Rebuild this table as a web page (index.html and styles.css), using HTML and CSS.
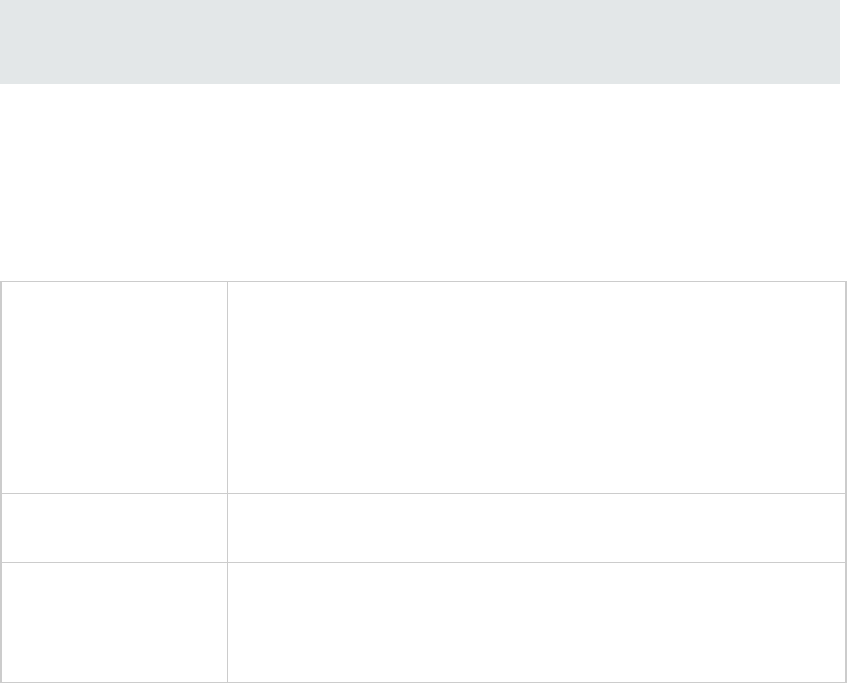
FILE: index.html
```html
<!DOCTYPE html>
<html>
<head>
<meta charset="utf-8">
<link rel="stylesheet" href="styles.css">
</head>
<body>
<div class="topbar"></div>
<main class="content">
  <table class="grid">
    <tr class="row-tall"><td class="label"></td><td class="value"></td></tr>
    <tr class="row-short"><td class="label"></td><td class="value"></td></tr>
    <tr class="row-mid"><td class="label"></td><td class="value"></td></tr>
  </table>
</main>
</body>
</html>
```
FILE: styles.css
```css
html, body {
  margin: 0;
  padding: 0;
  background: #ffffff;
  font-family: "Liberation Sans", Arial, sans-serif;
}
.topbar {
  width: 840px;
  height: 84px;
  background: #e3e7e8;
}
.content {
  padding: 197px 1px 0 0;
}
.grid {
  width: 847px;
  border-collapse: collapse;
  border-left: 2px solid #cccccc;
  border-right: 2px solid #cccccc;
}
.grid td {
  border: 1px solid #cccccc;
  padding: 0;
}
.label { width: 225px; }
.row-tall td { height: 211px; }
.row-short td { height: 68px; }
.row-mid td { height: 119px; }
```
